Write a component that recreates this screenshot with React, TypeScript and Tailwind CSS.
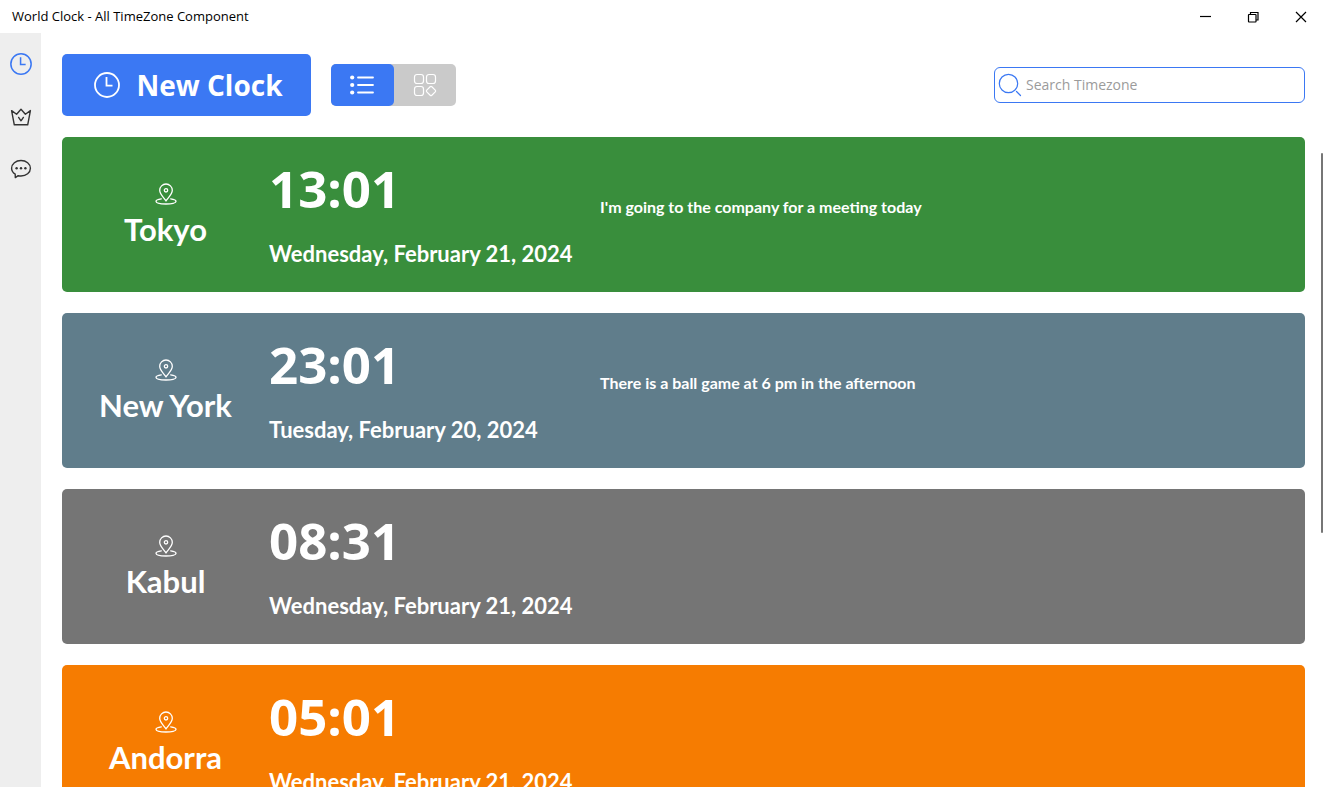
import { useState } from 'react';

interface Clock {
  city: string;
  time: string;
  date: string;
  note?: string;
  color: string;
}

const clocks: Clock[] = [
  {
    city: 'Tokyo',
    time: '13:01',
    date: 'Wednesday, February 21, 2024',
    note: "I'm going to the company for a meeting today",
    color: 'bg-[#398e3c]',
  },
  {
    city: 'New York',
    time: '23:01',
    date: 'Tuesday, February 20, 2024',
    note: 'There is a ball game at 6 pm in the afternoon',
    color: 'bg-[#607d8b]',
  },
  { city: 'Kabul', time: '08:31', date: 'Wednesday, February 21, 2024', color: 'bg-[#757575]' },
  { city: 'Andorra', time: '05:01', date: 'Wednesday, February 21, 2024', color: 'bg-[#f67c01]' },
];

function ClockIcon({ className }: { className?: string }) {
  return (
    <svg viewBox="0 0 26 26" fill="none" stroke="currentColor" strokeWidth="1.8" className={className} aria-hidden="true">
      <circle cx="13" cy="13" r="12" />
      <path d="M12.5 5v8.700h6" />
    </svg>
  );
}

function CrownIcon() {
  return (
    <svg viewBox="0 0 22 18" fill="none" stroke="currentColor" strokeWidth="1.4" strokeLinejoin="round" strokeLinecap="round" className="h-[18px] w-[22px]" aria-hidden="true">
      <path d="M1.600 2.600l5 3.600L11 1.200l4.400 5 5-3.600-2.700 14.200H4.300z" />
      <path d="M8.600 9.400l2.400 3.400 2.400-3.400" />
    </svg>
  );
}

function ChatIcon() {
  return (
    <svg viewBox="0 0 22 20" fill="none" stroke="currentColor" strokeWidth="1.4" strokeLinejoin="round" className="h-5 w-[22px]" aria-hidden="true">
      <path d="M5.200 15.200C3 13.800 1.600 11.700 1.600 9.300 1.600 4.900 5.800 1.500 11 1.500s9.400 3.400 9.400 7.800-4.200 7.700-9.400 7.700c-1 0-1.900-.1-2.800-.3L5.300 18.600z" />
      <g fill="currentColor" stroke="none">
        <circle cx="6.600" cy="9.300" r="1.200" />
        <circle cx="11" cy="9.300" r="1.200" />
        <circle cx="15.400" cy="9.300" r="1.200" />
      </g>
    </svg>
  );
}

function PinIcon() {
  return (
    <svg viewBox="0 0 22 22" fill="none" stroke="currentColor" strokeWidth="1.3" strokeLinejoin="round" strokeLinecap="round" className="size-[22px]" aria-hidden="true">
      <path d="M11 18C9.500 15.500 4.700 11.200 4.700 7.300a6.300 6.300 0 0 1 12.600 0c0 3.900-4.800 8.200-6.300 10.700z" />
      <circle cx="11" cy="7.300" r="1.700" />
      <path d="M6.300 15.900C3 16.400 1 17.200 1 18.300c0 1.600 4.400 2.700 10 2.700s10-1.100 10-2.700c0-1.100-2-1.900-5.300-2.400" />
    </svg>
  );
}

function SearchIcon() {
  return (
    <svg viewBox="0 0 24 24" fill="none" stroke="currentColor" strokeWidth="1.2" strokeLinecap="round" className="size-6 shrink-0" aria-hidden="true">
      <circle cx="10.500" cy="10.500" r="9.200" />
      <path d="M18.500 18.500l4 4" />
    </svg>
  );
}

function TitleBar() {
  return (
    <header className="flex h-[33px] shrink-0 items-center justify-between pl-3">
      <h1 className="text-[13px] text-black">World Clock - All TimeZone Component</h1>
      <div className="flex h-full text-black">
        <button type="button" aria-label="Minimize" className="flex w-12 items-center justify-center">
          <svg viewBox="0 0 12 12" className="size-3" stroke="currentColor" strokeWidth="1.2">
            <path d="M1 5.500h11" />
          </svg>
        </button>
        <button type="button" aria-label="Restore" className="flex w-12 items-center justify-center">
          <svg viewBox="0 0 12 12" className="size-3" fill="none" stroke="currentColor" strokeWidth="1.2">
            <rect x="1.500" y="3.500" width="7.500" height="7.500" rx="0.500" />
            <path d="M3.500 3.500V1.500h7.500V9H9" />
          </svg>
        </button>
        <button type="button" aria-label="Close" className="flex w-12 items-center justify-center">
          <svg viewBox="0 0 12 12" className="size-3" stroke="currentColor" strokeWidth="1.2">
            <path d="M1 1l10 10M11 1L1 11" />
          </svg>
        </button>
      </div>
    </header>
  );
}

function Sidebar() {
  return (
    <nav className="flex w-[41px] shrink-0 flex-col items-center gap-[33px] bg-[#eeeeee] pt-5 text-[#333333]">
      <button type="button" aria-label="Clocks" className="text-[#3b78f3]">
        <ClockIcon className="size-[22px]" />
      </button>
      <button type="button" aria-label="Premium">
        <CrownIcon />
      </button>
      <button type="button" aria-label="Feedback">
        <ChatIcon />
      </button>
    </nav>
  );
}

function ClockCard({ clock }: { clock: Clock }) {
  return (
    <article
      className={`grid h-[155px] shrink-0 grid-cols-[207px_331px_1fr] rounded-[5px] font-['Lato',sans-serif] font-bold text-white ${clock.color}`}
    >
      <div className="flex flex-col items-center pt-[46px]">
        <PinIcon />
        <h2 className="mt-1 text-[31px] leading-10">{clock.city}</h2>
      </div>
      <div className="flex flex-col pt-5">
        <time className="font-['Open_Sans',sans-serif] text-[51px] leading-[62px]">{clock.time}</time>
        <p className="mt-[19px] text-[22px] leading-8 whitespace-nowrap">{clock.date}</p>
      </div>
      <p className="pt-[60px] text-[16px] leading-5">{clock.note}</p>
    </article>
  );
}

export default function App() {
  const [view, setView] = useState<'list' | 'grid'>('list');

  return (
    <div className="flex h-screen flex-col overflow-hidden bg-white font-['Open_Sans',sans-serif]">
      <TitleBar />
      <div className="flex min-h-0 flex-1">
        <Sidebar />
        <main className="flex min-w-0 flex-1 flex-col pt-[21px] pl-[21px]">
          {/* Toolbar */}
          <div className="flex shrink-0 items-center pr-5">
            <button
              type="button"
              className="flex h-[62px] w-[249px] items-center justify-center gap-4 rounded-[5px] bg-[#3b78f3] pl-1 text-[28px] font-bold text-white"
            >
              <ClockIcon className="size-[26px]" />
              New Clock
            </button>
            <div className="ml-5 flex h-[42px] w-[125px] rounded-[5px] bg-[#cacaca] text-white">
              <button
                type="button"
                aria-label="List view"
                aria-pressed={view === 'list'}
                onClick={() => setView('list')}
                className={`flex flex-1 items-center justify-center rounded-[5px] ${view === 'list' ? 'bg-[#3b78f3]' : ''}`}
              >
                <svg viewBox="0 0 24 20" className="h-5 w-6" fill="none" stroke="currentColor" strokeWidth="1.8" strokeLinecap="round">
                  <path d="M8 2.500h15M8 10h15M8 17.500h15" />
                  <g fill="currentColor" stroke="none">
                    <circle cx="2.200" cy="2.500" r="2.100" />
                    <circle cx="2.200" cy="10" r="2.100" />
                    <circle cx="2.200" cy="17.500" r="2.100" />
                  </g>
                </svg>
              </button>
              <button
                type="button"
                aria-label="Grid view"
                aria-pressed={view === 'grid'}
                onClick={() => setView('grid')}
                className={`flex flex-1 items-center justify-center rounded-[5px] ${view === 'grid' ? 'bg-[#3b78f3]' : ''}`}
              >
                <svg viewBox="0 0 24 24" className="size-6" fill="none" stroke="currentColor" strokeWidth="1.2" strokeLinejoin="round">
                  <rect x="1.500" y="1.500" width="9" height="9" rx="2.500" />
                  <rect x="13.500" y="1.500" width="9" height="9" rx="2.500" />
                  <rect x="1.500" y="13.500" width="9" height="9" rx="2.500" />
                  <rect x="14.400" y="14.400" width="7.200" height="7.200" rx="1.200" transform="rotate(45 18 18)" />
                </svg>
              </button>
            </div>
            <label className="ml-auto flex h-9 w-[311px] items-center gap-1 rounded-md border border-[#3b78f3] px-[3px] text-[#3b78f3]">
              <SearchIcon />
              <input
                type="text"
                aria-label="Search Timezone"
                placeholder="Search Timezone"
                className="min-w-0 flex-1 text-sm text-black outline-none placeholder:text-[#9b9b9b]"
              />
            </label>
          </div>

          {/* Clock list with its scroll gutter */}
          <div className="mt-[21px] flex min-h-0 flex-1">
            <div className="flex min-w-0 flex-1 flex-col gap-[21px] overflow-hidden">
              {clocks.map((clock) => (
                <ClockCard key={clock.city} clock={clock} />
              ))}
            </div>
            <div className="flex w-5 shrink-0 justify-end pt-4 pr-[2px]">
              <div className="h-[380px] w-[2px] rounded-full bg-[#767676]" />
            </div>
          </div>
        </main>
      </div>
    </div>
  );
}
